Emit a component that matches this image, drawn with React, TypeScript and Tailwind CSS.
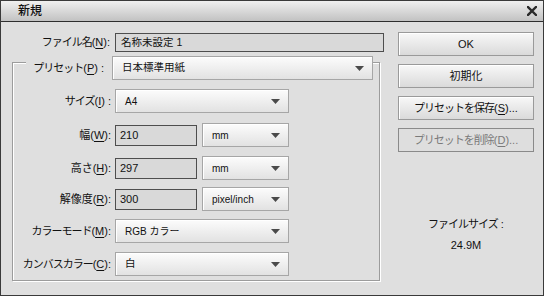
import React from "react";

const FONT = { fontFamily: '"Liberation Sans", "Noto Sans CJK JP", sans-serif' };

function U({ children }: { children: React.ReactNode }) {
  return <span className="underline underline-offset-[2px]">{children}</span>;
}

function J({ children }: { children: React.ReactNode }) {
  return <span className="tracking-[-1px]">{children}</span>;
}

function Arrow() {
  return (
    <svg width="9" height="5" viewBox="0 0 9 5" className="shrink-0">
      <polygon points="0,0 9,0 4.5,5" fill="#4a4a4a" />
    </svg>
  );
}

function Select({ w, text, small = false }: { w: string; text: string; small?: boolean }) {
  return (
    <div
      className={`${w} h-[24px] shrink-0 flex items-center justify-between pl-[9px] pr-[8px] border border-[#a6a6a6] bg-gradient-to-b from-[#fcfcfc] to-[#e2e2e2] shadow-[inset_1px_1px_0_#ffffff]`}
    >
      <span className={small ? "text-[10px] text-[#111]" : "text-[10.5px] text-[#111]"}>{text}</span>
      <Arrow />
    </div>
  );
}

function Input({ w, text }: { w: string; text: string }) {
  return (
    <div className={`${w} h-[21px] shrink-0 flex items-center pl-[4px] border border-[#4e4e4e] bg-[#d9d9d9] text-[11px] text-[#111]`}>
      {text}
    </div>
  );
}

function Label({ children }: { children: React.ReactNode }) {
  return (
    <div className="w-[98px] mr-[4px] shrink-0 text-right text-[11px] text-[#111] whitespace-nowrap">{children}</div>
  );
}

function Button({ children, disabled = false }: { children: React.ReactNode; disabled?: boolean }) {
  return (
    <div
      className={
        disabled
          ? "h-[24px] flex items-center justify-center border border-[#8a8a8a] bg-[#dedede] text-[11px] text-[#7a7a7a]"
          : "h-[24px] flex items-center justify-center border border-[#9a9a9a] bg-gradient-to-b from-[#f8f8f8] to-[#dadada] shadow-[inset_1px_1px_0_#ffffff] text-[11px] text-[#111]"
      }
    >
      {children}
    </div>
  );
}

export default function App() {
  return (
    <div style={FONT} className="w-[544px] h-[296px] border border-[#3a3a3a] bg-[#dfdfdf] flex flex-col overflow-hidden">
      {/* Title bar */}
      <div className="h-[21px] shrink-0 border-b border-[#2e2e2e] bg-gradient-to-b from-[#f0f0f0] to-[#c2c2c2] flex items-center justify-between pl-[17px] pr-[6px]">
        <span className="text-[12px] font-medium text-[#111] leading-none">新規</span>
        <svg width="10" height="10" viewBox="0 0 10 10">
          <path d="M1 1 L9 9 M9 1 L1 9" stroke="#2a2a2a" strokeWidth="2.4" strokeLinecap="square" />
        </svg>
      </div>

      <div className="flex flex-1">
        {/* Left column */}
        <div className="w-[385px] shrink-0 flex flex-col">
          <div className="mt-[11px] flex items-center">
            <div className="w-[109px] mr-[5px] shrink-0 text-right text-[11px] text-[#111] whitespace-nowrap">
              <J>ファイル名</J>(<U>N</U>):
            </div>
            <div className="w-[269px] h-[19px] flex items-center pl-[5px] border border-[#4e4e4e] bg-[#d9d9d9] text-[10.5px] text-[#111]">
              名称未設定 1
            </div>
          </div>

          {/* Group box */}
          <div className="ml-[11px] mt-[10px] w-[368px] h-[219px] border border-[#9c9c9c] shadow-[1px_1px_0_#ffffff,inset_1px_1px_0_#ffffff] flex flex-col">
            <div className="-mt-[7px] flex items-center">
              <div className="ml-[13px] w-[86px] shrink-0 bg-[#dfdfdf] text-right pr-[8px] text-[11px] text-[#111] whitespace-nowrap leading-[24px]">
                <J>プリセット</J>(<U>P</U>) :
              </div>
              <Select w="w-[261px]" text="日本標準用紙" />
            </div>

            <div className="mt-[9px] flex items-center">
              <Label>
                <J>サイズ</J>(<U>I</U>) :
              </Label>
              <Select w="w-[174px]" text="A4" small />
            </div>

            <div className="mt-[10px] flex items-center">
              <Label>
                幅(<U>W</U>):
              </Label>
              <Input w="w-[82px]" text="210" />
              <div className="ml-[5px]">
                <Select w="w-[87px]" text="mm" small />
              </div>
            </div>

            <div className="mt-[9px] flex items-center">
              <Label>
                高さ(<U>H</U>):
              </Label>
              <Input w="w-[82px]" text="297" />
              <div className="ml-[5px]">
                <Select w="w-[87px]" text="mm" small />
              </div>
            </div>

            <div className="mt-[7px] flex items-center">
              <Label>
                解像度(<U>R</U>):
              </Label>
              <Input w="w-[82px]" text="300" />
              <div className="ml-[5px]">
                <Select w="w-[87px]" text="pixel/inch" small />
              </div>
            </div>

            <div className="mt-[8px] flex items-center">
              <Label>
                <J>カラーモード</J>(<U>M</U>):
              </Label>
              <Select w="w-[174px]" text="RGB カラー" small />
            </div>

            <div className="mt-[9px] flex items-center">
              <Label>
                <J>カンバスカラー</J>(<U>C</U>):
              </Label>
              <Select w="w-[174px]" text="白" />
            </div>
          </div>
        </div>

        {/* Right column */}
        <div className="ml-[12px] w-[136px] shrink-0 flex flex-col">
          <div className="mt-[10px] flex flex-col gap-[8px]">
            <Button>OK</Button>
            <Button>初期化</Button>
            <Button>
              <J>プリセットを保存</J>(<U>S</U>)...
            </Button>
            <Button disabled>
              <J>プリセットを削除</J>(<U>D</U>)...
            </Button>
          </div>
          <div className="mt-[64px] text-center text-[11px] leading-[16px] text-[#111]">
            <J>ファイルサイズ</J> :
          </div>
          <div className="mt-[5px] text-center text-[11px] leading-[16px] text-[#111]">24.9M</div>
        </div>
      </div>
    </div>
  );
}
